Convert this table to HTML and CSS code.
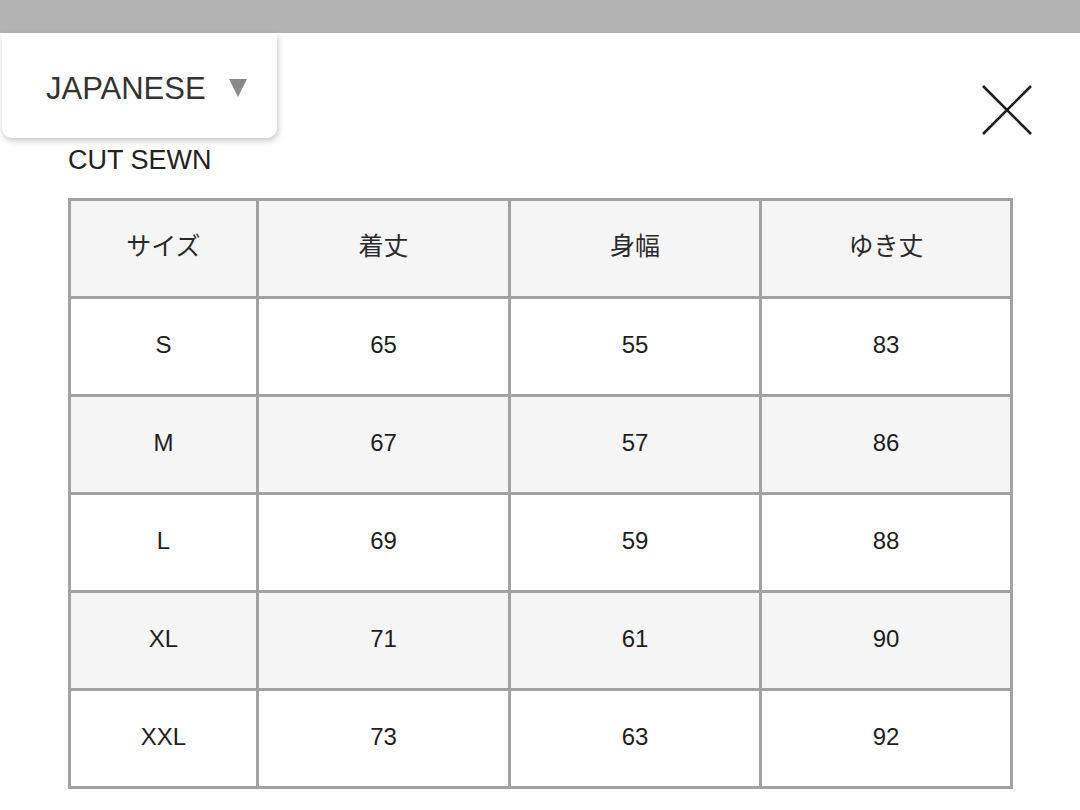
FILE: index.html
```html
<!DOCTYPE html>
<html lang="ja">
<head>
<meta charset="utf-8">
<title>Size chart</title>
<link rel="stylesheet" href="styles.css">
</head>
<body>
<div class="topbar"></div>
<div class="header">
  <div class="lang-card">
    <span class="lang-label">JAPANESE</span>
    <span class="caret"></span>
  </div>
  <button class="close" aria-label="close">
    <svg width="50" height="50" viewBox="0 0 50 50"><path d="M1 1 L49 49 M49 1 L1 49" stroke="#1e1e1e" stroke-width="2.6" fill="none"/></svg>
  </button>
</div>
<h2 class="title">CUT SEWN</h2>
<div class="chart">
  <div class="cell head">サイズ</div><div class="cell head">着丈</div><div class="cell head">身幅</div><div class="cell head">ゆき丈</div>
  <div class="cell">S</div><div class="cell">65</div><div class="cell">55</div><div class="cell">83</div>
  <div class="cell alt">M</div><div class="cell alt">67</div><div class="cell alt">57</div><div class="cell alt">86</div>
  <div class="cell">L</div><div class="cell">69</div><div class="cell">59</div><div class="cell">88</div>
  <div class="cell alt">XL</div><div class="cell alt">71</div><div class="cell alt">61</div><div class="cell alt">90</div>
  <div class="cell">XXL</div><div class="cell">73</div><div class="cell">63</div><div class="cell">92</div>
</div>
</body>
</html>
```
FILE: styles.css
```css
html, body {
  margin: 0;
  padding: 0;
  background: #ffffff;
}
body {
  font-family: "Liberation Sans", Arial, "Noto Sans CJK JP", sans-serif;
  color: #222;
  width: 1080px;
  height: 810px;
  overflow: hidden;
}
.topbar {
  height: 33px;
  background: #b3b3b3;
}
.header {
  display: flex;
  justify-content: space-between;
  align-items: flex-start;
  height: 105px;
}
.lang-card {
  margin-left: 2px;
  box-sizing: border-box;
  width: 275px;
  height: 105px;
  padding: 40px 30px 0 44px;
  display: flex;
  align-items: flex-start;
  background: #fff;
  border-radius: 0 0 10px 10px;
  box-shadow: 1px 3px 6px rgba(0, 0, 0, 0.22);
}
.lang-label {
  font-size: 31px;
  line-height: 31px;
  color: #333;
}
.caret {
  margin-left: 23px;
  margin-top: 6px;
  width: 0;
  height: 0;
  border-left: 9px solid transparent;
  border-right: 9px solid transparent;
  border-top: 18px solid #8a8a8a;
}
.close {
  margin: 52px 48px 0 0;
  padding: 0;
  border: 0;
  background: none;
  width: 50px;
  height: 50px;
  display: block;
}
.close svg { display: block; }
.title {
  margin: 9px 0 24px 68px;
  font-size: 27px;
  line-height: 27px;
  font-weight: normal;
  color: #222;
}
.chart {
  margin-left: 68px;
  width: 945px;
  box-sizing: border-box;
  display: grid;
  grid-template-columns: 185px 249px 248px 248px;
  grid-auto-rows: 95px;
  gap: 3px;
  border: 3px solid #a2a2a2;
  background: #a2a2a2;
}
.cell {
  background: #fff;
  display: flex;
  align-items: center;
  justify-content: center;
  font-size: 24px;
  color: #1e1e1e;
  padding-bottom: 3px;
}
.cell.head {
  background: #f5f5f5;
  font-family: "Noto Sans CJK JP", "Liberation Sans", sans-serif;
  font-size: 25px;
  color: #2a2a2a;
  padding-bottom: 9px;
}
.cell.alt {
  background: #f5f5f5;
}
```
